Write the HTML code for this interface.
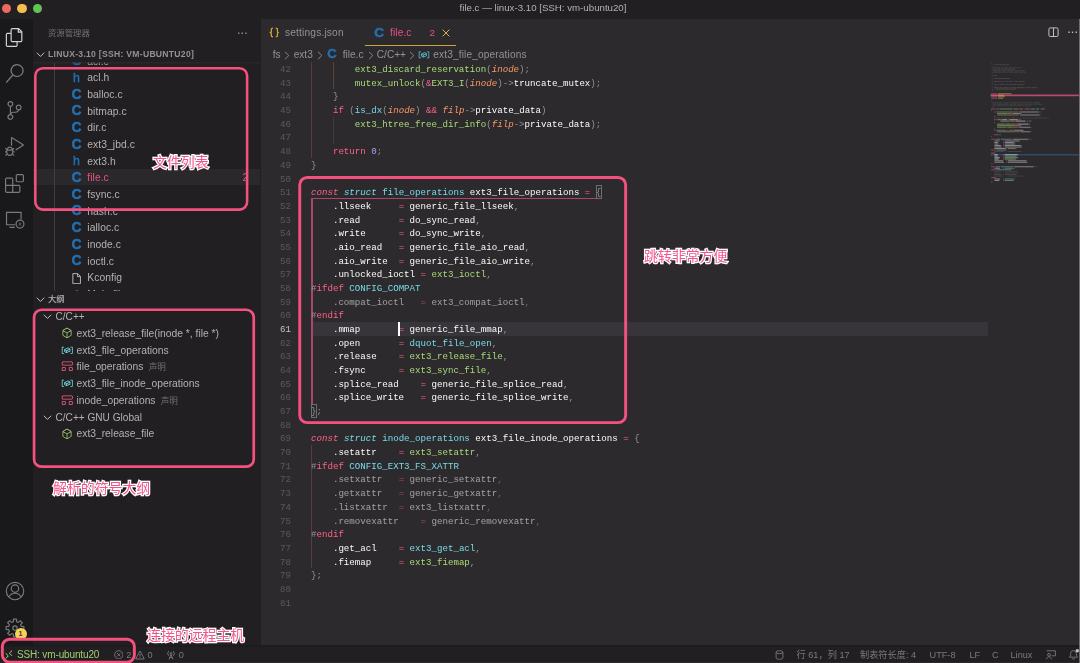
<!DOCTYPE html>
<html lang="zh">
<head>
<meta charset="utf-8">
<title>file.c — linux-3.10 [SSH: vm-ubuntu20]</title>
<style>
*{box-sizing:border-box;margin:0;padding:0}
html,body{width:1080px;height:663px;overflow:hidden;background:#2d2a2e}
body{position:relative;font-family:"Liberation Sans","Noto Sans CJK SC",sans-serif;font-size:9.9px;color:#c1c0c0}
.abs{position:absolute}
#titlebar,#activity,#sidebar,#editor,#status,.anno{will-change:transform}
#titlebar{left:0;top:0;width:1080px;height:18.5px;background:#221f22;z-index:5}
#titlebar .t{position:absolute;left:0;width:1086px;top:0;height:18px;line-height:16.4px;text-align:center;font-size:9.7px;color:#b3b1b2}
.tl{position:absolute;top:3.7px;width:9.4px;height:9.4px;border-radius:50%}
#activity{left:0;top:18px;width:33px;height:627.6px;background:#19181a}
#sidebar{left:33px;top:18px;width:228px;height:627.6px;background:#221f22}
#editor{left:261px;top:18px;width:818px;height:627.6px;background:#2d2a2e}
#rightedge{left:1078.8px;top:0;width:1.2px;height:663px;background:#6f6d70}
#status{left:0;top:645px;width:1079px;height:18px;background:#221f22;border-top:2px solid #1d1b1e;border-bottom:1.1px solid #2c292d;color:#7b797c;font-size:9.2px}
#status span{position:absolute;top:-0.8px;line-height:18px;white-space:nowrap}
.box{position:absolute;border:2.5px solid #f4517f;border-radius:9px}
.anno{position:absolute;font-family:"Liberation Sans","Noto Sans CJK SC",sans-serif;font-weight:400;font-size:13.9px;line-height:16px;color:#f2558a;white-space:nowrap;-webkit-text-stroke:2.5px #fff;paint-order:stroke fill}
/* sidebar */
.row{position:absolute;left:0;width:227px;height:16.67px;line-height:16.67px;white-space:nowrap;color:#b3b1b3;font-size:10.3px}
.row .lbl{position:absolute;left:54.3px;top:0;letter-spacing:.06px}
.row .ic{position:absolute;left:38px;top:0;width:12px;text-align:center;font-weight:700;color:#2270b2;-webkit-text-stroke:0.45px #2270b2;font-size:13.9px;margin-top:-1.5px;margin-left:-0.5px}
.orow{position:absolute;left:0;width:227px;height:16.67px;line-height:16.67px;white-space:nowrap;color:#b3b1b3;font-size:10.3px}
.orow .lbl{position:absolute;left:43.5px;top:0}
.orow svg{position:absolute;left:28.7px;top:1.8px}
.dim{color:#727072;font-size:8.6px}
/* code */
#code{position:absolute;left:0;top:44.2px;width:818px;font-family:"Liberation Mono","DejaVu Sans Mono",monospace;font-size:9.14px;line-height:13.68px;color:#fcfcfa}
.ln{position:absolute;left:0;width:818px;height:13.68px;white-space:pre}
.ln .n{position:absolute;left:0;width:30px;text-align:right;color:#5b595c}
.ln .c{position:absolute;left:50px;top:0}
.k{color:#ff6188}.ki{color:#ff6188;font-style:italic}.bi{color:#78dce8;font-style:italic}.b{color:#78dce8}
.g{color:#a9dc76}.o{color:#fc9867;font-style:italic}.p{color:#ab9df2}.y{color:#939293}.w{color:#fcfcfa}
.f{opacity:.55}
.guide{position:absolute;width:1px;background:#403e41}
</style>
</head>
<body>
<svg width="0" height="0" style="position:absolute">
<defs>
<symbol id="i-var" viewBox="0 0 16 13"><path fill="currentColor" transform="translate(0,-2)" d="M2 5h2V4H1.500l-.5.5v8l.5.5H4v-1H2V5zm12.500-1H12v1h2v7h-2v1h2.500l.5-.5v-8l-.5-.5zm-2.740 2.570L12 7v2.510l-.3.450-4.500 2h-.460l-2.500-1.500-.240-.430v-2.500l.3-.460 4.500-2h.460l2.500 1.500zM5 9.710l1.500.9V9.280L5 8.380v1.330zm.580-2.150l1.450.870 3.390-1.500-1.450-.870-3.390 1.500zm1.950 3.170l3.500-1.560v-1.400l-3.500 1.550v1.410z"/></symbol>
<symbol id="i-method" viewBox="0 0 16 16"><path fill="currentColor" d="M13.510 4l-5-3h-1l-5 3-.490.860v6l.490.850 5 3h1l5-3 .490-.850v-6L13.510 4zm-6 9.560l-4.500-2.700V5.700l4.500 2.450v5.410zM3.270 4.700l4.740-2.840 4.740 2.840-4.740 2.590L3.270 4.700zm9.740 6.160l-4.500 2.700V8.150l4.500-2.450v5.160z"/></symbol>
<symbol id="i-struct" viewBox="0 0 16 16"><path fill="currentColor" d="M2 2L1 3v3l1 1h12l1-1V3l-1-1H2zm0 1h12v3H2V3zm-1 7l1-1h3l1 1v3l-1 1H2l-1-1v-3zm2 0H2v3h3v-3H3zm7 0l1-1h3l1 1v3l-1 1h-3l-1-1v-3zm2 0h-1v3h3v-3h-2z"/></symbol>
<symbol id="i-chev" viewBox="0 0 16 16"><path fill="none" stroke="currentColor" stroke-width="1.45" d="M2.600 5.400L8 10.800 13.400 5.400"/></symbol>
</defs>
</svg>

<div id="titlebar" class="abs">
  <div class="tl" style="left:2px;background:#ec6a5e"></div>
  <div class="tl" style="left:17.3px;background:#f4bf4f"></div>
  <div class="tl" style="left:32.6px;background:#61c554"></div>
  <div class="t">file.c — linux-3.10 [SSH: vm-ubuntu20]</div>
</div>
<div id="activity" class="abs"><!-- coords relative to #activity (top 18) -->
<svg class="abs" style="left:4.5px;top:9.5px" width="19" height="19" viewBox="0 0 24 24"><path fill="#d2d0d1" d="M17.500 0h-9L7 1.500V6H2.500L1 7.500v15.070L2.500 24h12.070L16 22.570V18h4.700l1.300-1.430V4.500L17.500 0zm0 2.120l2.380 2.380H17.500V2.120zm-3 20.380h-12v-15H7v9.070L8.500 18h6v4.500zm6-6h-12v-15H16V6h4.500v10.500z"/></svg>
<svg class="abs" style="left:4.5px;top:46px" width="19" height="19" viewBox="0 0 24 24"><path fill="#7b797c" d="M15.250 0a8.250 8.250 0 0 0-6.180 13.720L1 22.880l1.120 1 8.050-9.120A8.251 8.251 0 1 0 15.250.010V0zm0 15a6.750 6.750 0 1 1 0-13.500 6.750 6.750 0 0 1 0 13.500z"/></svg>
<svg class="abs" style="left:4.8px;top:82.5px" width="19" height="19" viewBox="0 0 24 24"><path fill="#7b797c" d="M21.007 8.222A3.738 3.738 0 0 0 15.045 5.200a3.737 3.737 0 0 0 1.156 6.583 2.988 2.988 0 0 1-2.668 1.670h-2.990a4.456 4.456 0 0 0-2.989 1.165V7.400a3.737 3.737 0 1 0-1.494 0v9.117a3.776 3.776 0 1 0 1.816.099 2.990 2.990 0 0 1 2.668-1.667h2.990a4.484 4.484 0 0 0 4.223-3.039 3.736 3.736 0 0 0 3.250-3.687zM4.565 3.738a2.242 2.242 0 1 1 4.484 0 2.242 2.242 0 0 1-4.484 0zm4.484 16.441a2.242 2.242 0 1 1-4.484 0 2.242 2.242 0 0 1 4.484 0zm8.221-9.715a2.242 2.242 0 1 1 0-4.485 2.242 2.242 0 0 1 0 4.485z"/></svg>
<svg class="abs" style="left:4.5px;top:119px" width="19" height="19" viewBox="0 0 24 24"><path fill="#7b797c" d="M10.940 13.500l-1.320 1.320a3.730 3.730 0 0 0-7.240 0L1.060 13.500 0 14.560l1.720 1.720-.22.220V18H0v1.500h1.500v.080c.077.489.214.966.410 1.420L0 22.940 1.060 24l1.650-1.650A4.308 4.308 0 0 0 6 24a4.310 4.310 0 0 0 3.290-1.650L10.940 24 12 22.940 10.090 21c.198-.464.336-.951.410-1.450v-.1H12V18h-1.500v-1.500l-.22-.22L12 14.560l-1.060-1.060zM6 13.500a2.250 2.250 0 0 1 2.250 2.250h-4.500A2.250 2.250 0 0 1 6 13.500zm3 6a3.330 3.330 0 0 1-3 3 3.330 3.330 0 0 1-3-3v-2.250h6v2.250zm14.760-9.900v1.260L13.500 17.370V15.600l8.500-5.370L9 2v9.460a5.070 5.070 0 0 0-1.500-.72V.630L8.640 0l15.120 9.600z"/></svg>
<svg class="abs" style="left:4.5px;top:155.500px" width="19" height="19" viewBox="0 0 24 24"><path fill="#7b797c" d="M13.500 1.500L15 0h7.500L24 1.500V9l-1.500 1.500H15L13.500 9V1.500zm1.500 0V9h7.500V1.500H15zM0 15V6l1.500-1.500H9L10.500 6v7.500H18l1.500 1.500v7.500L18 24H1.500L0 22.500V15zm9-1.500V6H1.500v7.500H9zM9 15H1.500v7.500H9V15zm1.500 7.500H18V15h-7.500v7.500z"/></svg>
<svg class="abs" style="left:5.0px;top:192px" width="20" height="19" viewBox="0 0 25 24"><g fill="none" stroke="#7b797c" stroke-width="1.5"><path d="M12.500 18.600H1.800V3h18.400v8.600M5.500 22h6.700"/><circle cx="18.800" cy="17.800" r="5"/><path d="M17.300 15.700l1.700 1.600-1.700 1.600M20.300 16.700l-1.600 1.600 1.600 1.600" stroke-width="1.100"/></g></svg>
<!-- account -->
<svg class="abs" style="left:4.5px;top:563.3px" width="20" height="20" viewBox="0 0 20 20"><g fill="none" stroke="#7b797c" stroke-width="1.15"><circle cx="10" cy="10" r="8.7"/><circle cx="10" cy="7.6" r="3.7"/><path d="M3.800 16.100c1.300-2.700 3.600-3.900 6.200-3.900s4.900 1.200 6.200 3.900"/></g></svg>
<!-- gear -->
<svg class="abs" style="left:4.8px;top:599.8px" width="20" height="20" viewBox="0 0 20 20"><g fill="none" stroke="#7b797c" stroke-width="1.15" stroke-linejoin="round"><path d="M8.43 3.69L8.51 1.12L11.49 1.12L11.57 3.69L13.35 4.43L15.23 2.67L17.33 4.77L15.57 6.65L16.31 8.43L18.88 8.51L18.88 11.49L16.31 11.57L15.57 13.35L17.33 15.23L15.23 17.33L13.35 15.57L11.57 16.31L11.49 18.88L8.51 18.88L8.43 16.31L6.65 15.57L4.77 17.33L2.67 15.23L4.43 13.35L3.69 11.57L1.12 11.49L1.12 8.51L3.69 8.43L4.43 6.65L2.67 4.77L4.77 2.67L6.65 4.43z"/><circle cx="10" cy="10" r="2.2"/></g></svg>
<div class="abs" style="left:14.6px;top:609.8px;width:12px;height:12px;border-radius:50%;background:#f6d356;color:#3b3a3c;font-size:7.5px;font-weight:700;line-height:12px;text-align:center">1</div>
</div>
<div id="sidebar" class="abs"><div class="abs" style="left:15px;top:7.6px;font-size:8.4px;line-height:15px;color:#727072;white-space:nowrap">资源管理器</div>
<div class="abs" style="left:204.5px;top:6.1px;font-size:9px;line-height:15px;color:#939293;letter-spacing:1.1px;font-weight:700">...</div>
<svg class="abs" style="left:2.3px;top:30.8px;color:#c1c0c0" width="11" height="11"><use href="#i-chev"/></svg>
<div class="abs" style="left:15px;top:28.5px;font-size:8.6px;line-height:15px;font-weight:700;color:#939293;white-space:nowrap;letter-spacing:0.28px">LINUX-3.10 [SSH: VM-UBUNTU20]</div>
<div class="abs" style="left:0;top:44px;width:227px;height:229.2px;overflow:hidden">
<div class="row" style="top:-8.27px;"><span class="ic">C</span><span class="lbl">acl.c</span></div>
<div class="row" style="top:8.40px;"><span class="ic" style="font-weight:400;font-size:12.4px;color:#2270b2;-webkit-text-stroke:0.4px #2270b2;margin-top:-0.3px">h</span><span class="lbl">acl.h</span></div>
<div class="row" style="top:25.07px;"><span class="ic">C</span><span class="lbl">balloc.c</span></div>
<div class="row" style="top:41.74px;"><span class="ic">C</span><span class="lbl">bitmap.c</span></div>
<div class="row" style="top:58.41px;"><span class="ic">C</span><span class="lbl">dir.c</span></div>
<div class="row" style="top:75.08px;"><span class="ic">C</span><span class="lbl">ext3_jbd.c</span></div>
<div class="row" style="top:91.75px;"><span class="ic" style="font-weight:400;font-size:12.4px;color:#2270b2;-webkit-text-stroke:0.4px #2270b2;margin-top:-0.3px">h</span><span class="lbl">ext3.h</span></div>
<div class="abs" style="left:0;top:106.6px;width:227.6px;height:16.9px;background:#2b282c"></div>
<div class="row" style="top:108.42px;"><span class="ic">C</span><span class="lbl" style="color:#e5537f">file.c</span><span class="abs" style="left:209.5px;top:0;color:#e5537f">2</span></div>
<div class="row" style="top:125.09px;"><span class="ic">C</span><span class="lbl">fsync.c</span></div>
<div class="row" style="top:141.76px;"><span class="ic">C</span><span class="lbl">hash.c</span></div>
<div class="row" style="top:158.43px;"><span class="ic">C</span><span class="lbl">ialloc.c</span></div>
<div class="row" style="top:175.10px;"><span class="ic">C</span><span class="lbl">inode.c</span></div>
<div class="row" style="top:191.77px;"><span class="ic">C</span><span class="lbl">ioctl.c</span></div>
<div class="row" style="top:208.44px;"><svg class="abs" style="left:38.6px;top:2.4px" width="9.3" height="11.3" viewBox="0 0 9 11"><path d="M0.800 0.600h4.700l2.700 2.700v7.100h-7.400zM5.300 0.800v2.700h2.700" fill="none" stroke="#c1c0c0" stroke-width="0.9"/></svg><span class="lbl">Kconfig</span></div>
<div class="row" style="top:225.11px;"><span class="ic" style="font-weight:400;font-size:9px;color:#c1c0c0">⚙</span><span class="lbl">Makefile</span></div>
<div class="abs" style="left:21px;top:0;width:1px;height:231px;background:#403e41"></div>
<div class="abs" style="left:0;top:0;width:227px;height:3px;background:linear-gradient(rgba(45,42,46,.8),rgba(45,42,46,0))"></div>
</div>
<svg class="abs" style="left:2.3px;top:276.2px;color:#c1c0c0" width="11" height="11"><use href="#i-chev"/></svg>
<div class="abs" style="left:15px;top:274.1px;font-size:8.4px;line-height:15px;font-weight:500;color:#b5b3b4;white-space:nowrap">大纲</div>
<div class="orow" style="top:291.27px"><svg class="abs" style="left:8.7px;top:2.2px;color:#c1c0c0" width="11" height="11"><use href="#i-chev"/></svg><span class="lbl" style="left:22.5px;font-size:10.1px">C/C++</span></div>
<div class="orow" style="top:308.07px"><svg style="color:#a9dc76;margin-left:-0.5px;margin-top:-0.5px" width="12" height="12"><use href="#i-method"/></svg><span class="lbl">ext3_release_file(inode *, file *)</span></div>
<div class="orow" style="top:324.77px"><svg style="color:#78dce8;margin-left:-0.8px;margin-top:-0.8px" width="12.5" height="12.5"><use href="#i-var"/></svg><span class="lbl">ext3_file_operations</span></div>
<div class="orow" style="top:341.47px"><svg style="color:#ff6188;margin-left:-0.8px;margin-top:-0.8px" width="12.5" height="12.5"><use href="#i-struct"/></svg><span class="lbl">file_operations <span class="dim">&nbsp;声明</span></span></div>
<div class="orow" style="top:358.17px"><svg style="color:#78dce8;margin-left:-0.8px;margin-top:-0.8px" width="12.5" height="12.5"><use href="#i-var"/></svg><span class="lbl">ext3_file_inode_operations</span></div>
<div class="orow" style="top:374.87px"><svg style="color:#ff6188;margin-left:-0.8px;margin-top:-0.8px" width="12.5" height="12.5"><use href="#i-struct"/></svg><span class="lbl">inode_operations <span class="dim">&nbsp;声明</span></span></div>
<div class="orow" style="top:391.57px"><svg class="abs" style="left:8.7px;top:2.2px;color:#c1c0c0" width="11" height="11"><use href="#i-chev"/></svg><span class="lbl" style="left:22.5px;font-size:10.1px">C/C++ GNU Global</span></div>
<div class="orow" style="top:408.27px"><svg style="color:#a9dc76;margin-left:-0.5px;margin-top:-0.5px" width="12" height="12"><use href="#i-method"/></svg><span class="lbl">ext3_release_file</span></div></div>
<div id="editor" class="abs"><!-- tabs -->
<div class="abs" style="left:0;top:0;width:818px;height:28px;font-size:10.2px;line-height:28px;white-space:nowrap">
  <span class="abs" style="left:8.8px;top:0.3px;color:#d9b93a;font-weight:400;font-size:9.8px;letter-spacing:2.6px;-webkit-text-stroke:0.3px #d9b93a">{}</span>
  <span class="abs" style="left:24px;top:0.7px;color:#939293;letter-spacing:.16px">settings.json</span>
  <span class="abs" style="left:113.2px;top:0.6px;color:#2270b2;-webkit-text-stroke:0.45px #2270b2;font-weight:700;font-size:13.6px">C</span>
  <span class="abs" style="left:129px;top:0.7px;color:#e5537f;letter-spacing:.1px">file.c</span>
  <span class="abs" style="left:168.6px;top:0.7px;color:#e5537f;font-size:9.9px">2</span>
  <svg class="abs" style="left:180.5px;top:10.8px" width="8" height="8" viewBox="0 0 8 8"><path d="M0.600 0.600L7.400 7.400M7.400 0.600L0.600 7.400" stroke="#d9b544" stroke-width="1" fill="none"/></svg>
  <div class="abs" style="left:104px;top:26.6px;width:91px;height:1.2px;background:#c9a540"></div>
  <!-- editor actions -->
  <svg class="abs" style="left:786.5px;top:9px" width="11" height="11" viewBox="0 0 11 11"><rect x="0.900" y="0.900" width="9.200" height="8.600" rx="1.300" fill="none" stroke="#c1c0c0" stroke-width="1"/><path d="M5.500 1v8.400" stroke="#c1c0c0" stroke-width="1"/></svg>
  <span class="abs" style="left:806.7px;top:-1.800px;color:#c1c0c0;font-size:9px;letter-spacing:1.1px;font-weight:700">...</span>
</div>
<!-- breadcrumbs -->
<div class="abs" style="left:0;top:28px;width:818px;height:16px;font-size:10.1px;line-height:16.600px;white-space:nowrap;color:#939293">
  <span class="abs" style="left:11.8px;top:0.6px">fs</span>
  <svg class="abs bcs" style="left:22.9px;top:4.6px" width="6" height="9" viewBox="0 0 6 9"><path d="M1 0.800L4.800 4.500 1 8.200" fill="none" stroke="#8a888a" stroke-width="0.950"/></svg>
  <span class="abs" style="left:32.7px;top:0.6px">ext3</span>
  <svg class="abs bcs" style="left:55.6px;top:4.6px" width="6" height="9" viewBox="0 0 6 9"><path d="M1 0.800L4.800 4.500 1 8.200" fill="none" stroke="#8a888a" stroke-width="0.950"/></svg>
  <span class="abs" style="left:66.3px;top:0.3px;color:#2270b2;-webkit-text-stroke:0.4px #2270b2;font-weight:700;font-size:13px">C</span>
  <span class="abs" style="left:81.7px;top:0.6px">file.c</span>
  <svg class="abs bcs" style="left:106.6px;top:4.6px" width="6" height="9" viewBox="0 0 6 9"><path d="M1 0.800L4.800 4.500 1 8.200" fill="none" stroke="#8a888a" stroke-width="0.950"/></svg>
  <span class="abs" style="left:115.8px;top:0.6px">C/C++</span>
  <svg class="abs bcs" style="left:148.2px;top:4.6px" width="6" height="9" viewBox="0 0 6 9"><path d="M1 0.800L4.800 4.500 1 8.200" fill="none" stroke="#8a888a" stroke-width="0.950"/></svg>
  <svg class="abs" style="left:157px;top:4.2px;color:#5fbfd0" width="12" height="9.75" viewBox="0 0 16 13"><use href="#i-var"/></svg>
  <span class="abs" style="left:172.2px;top:0.6px;letter-spacing:.16px">ext3_file_operations</span>
</div>
<div class="abs" style="left:50px;top:304.02px;width:677px;height:13.68px;background:#38353a"></div>
<div class="guide" style="left:50.30px;top:44.10px;height:95.76px;background:#5a3a44;width:1px"></div>
<div class="guide" style="left:72.24px;top:44.10px;height:27.36px;background:#5c4438;width:1px"></div>
<div class="guide" style="left:72.24px;top:98.82px;height:27.36px;background:#403e41;width:1px"></div>
<div class="guide" style="left:50.30px;top:180.90px;height:205.20px;background:#a8476b;width:1.5px"></div>
<div class="guide" style="left:50.30px;top:427.14px;height:123.12px;background:#5a3a44;width:1px"></div>
<div class="abs" style="left:50.30px;top:179.60px;width:285.17px;height:1.6px;background:#a8476b"></div>
<div class="abs" style="left:335.17px;top:167.22px;width:5.78px;height:13.88px;border:1px solid #6e6c6f"></div>
<div class="abs" style="left:49.80px;top:386.10px;width:5.78px;height:13.88px;border:1px solid #6e6c6f"></div>
<div id="code" style="top:45.10px">
<div class="ln" style="top:0.00px"><span class="n">42</span><span class="c">        <span class="g">ext3_discard_reservation</span><span class="y">(</span><span class="o">inode</span><span class="y">);</span></span></div>
<div class="ln" style="top:13.68px"><span class="n">43</span><span class="c">        <span class="g">mutex_unlock</span><span class="y">(</span><span class="k">&amp;</span><span class="g">EXT3_I</span><span class="y">(</span><span class="o">inode</span><span class="y">)-&gt;</span>truncate_mutex<span class="y">);</span></span></div>
<div class="ln" style="top:27.36px"><span class="n">44</span><span class="c">    <span class="y">}</span></span></div>
<div class="ln" style="top:41.04px"><span class="n">45</span><span class="c">    <span class="k">if</span> <span class="y">(</span><span class="b">is_dx</span><span class="y">(</span><span class="o">inode</span><span class="y">)</span> <span class="k">&amp;&amp;</span> <span class="o">filp</span><span class="y">-&gt;</span>private_data<span class="y">)</span></span></div>
<div class="ln" style="top:54.72px"><span class="n">46</span><span class="c">        <span class="g">ext3_htree_free_dir_info</span><span class="y">(</span><span class="o">filp</span><span class="y">-&gt;</span>private_data<span class="y">);</span></span></div>
<div class="ln" style="top:68.40px"><span class="n">47</span><span class="c"></span></div>
<div class="ln" style="top:82.08px"><span class="n">48</span><span class="c">    <span class="k">return</span> <span class="p">0</span><span class="y">;</span></span></div>
<div class="ln" style="top:95.76px"><span class="n">49</span><span class="c"><span class="y">}</span></span></div>
<div class="ln" style="top:109.44px"><span class="n">50</span><span class="c"></span></div>
<div class="ln" style="top:123.12px"><span class="n">51</span><span class="c"><span class="ki">const</span> <span class="bi">struct</span> <span class="b">file_operations</span> ext3_file_operations <span class="k">=</span> <span class="y">{</span></span></div>
<div class="ln" style="top:136.80px"><span class="n">52</span><span class="c">    .llseek     <span class="k">=</span> <span class="w">generic_file_llseek</span><span class="y">,</span></span></div>
<div class="ln" style="top:150.48px"><span class="n">53</span><span class="c">    .read       <span class="k">=</span> <span class="w">do_sync_read</span><span class="y">,</span></span></div>
<div class="ln" style="top:164.16px"><span class="n">54</span><span class="c">    .write      <span class="k">=</span> <span class="w">do_sync_write</span><span class="y">,</span></span></div>
<div class="ln" style="top:177.84px"><span class="n">55</span><span class="c">    .aio_read   <span class="k">=</span> <span class="w">generic_file_aio_read</span><span class="y">,</span></span></div>
<div class="ln" style="top:191.52px"><span class="n">56</span><span class="c">    .aio_write  <span class="k">=</span> <span class="w">generic_file_aio_write</span><span class="y">,</span></span></div>
<div class="ln" style="top:205.20px"><span class="n">57</span><span class="c">    .unlocked_ioctl <span class="k">=</span> <span class="g">ext3_ioctl</span><span class="y">,</span></span></div>
<div class="ln" style="top:218.88px"><span class="n">58</span><span class="c"><span class="y">#</span><span class="k">ifdef</span> <span class="b">CONFIG_COMPAT</span></span></div>
<div class="ln" style="top:232.56px"><span class="n">59</span><span class="c"><span class="f">    .compat_ioctl   <span class="k">=</span> ext3_compat_ioctl<span class="y">,</span></span></span></div>
<div class="ln" style="top:246.24px"><span class="n">60</span><span class="c"><span class="y">#</span><span class="k">endif</span></span></div>
<div class="ln" style="top:259.92px"><span class="n" style="color:#c1c0c0">61</span><span class="c">    .mmap       <span class="k">=</span> <span class="w">generic_file_mmap</span><span class="y">,</span></span></div>
<div class="ln" style="top:273.60px"><span class="n">62</span><span class="c">    .open       <span class="k">=</span> <span class="b">dquot_file_open</span><span class="y">,</span></span></div>
<div class="ln" style="top:287.28px"><span class="n">63</span><span class="c">    .release    <span class="k">=</span> <span class="g">ext3_release_file</span><span class="y">,</span></span></div>
<div class="ln" style="top:300.96px"><span class="n">64</span><span class="c">    .fsync      <span class="k">=</span> <span class="g">ext3_sync_file</span><span class="y">,</span></span></div>
<div class="ln" style="top:314.64px"><span class="n">65</span><span class="c">    .splice_read    <span class="k">=</span> <span class="w">generic_file_splice_read</span><span class="y">,</span></span></div>
<div class="ln" style="top:328.32px"><span class="n">66</span><span class="c">    .splice_write   <span class="k">=</span> <span class="w">generic_file_splice_write</span><span class="y">,</span></span></div>
<div class="ln" style="top:342.00px"><span class="n">67</span><span class="c"><span class="y">};</span></span></div>
<div class="ln" style="top:355.68px"><span class="n">68</span><span class="c"></span></div>
<div class="ln" style="top:369.36px"><span class="n">69</span><span class="c"><span class="ki">const</span> <span class="bi">struct</span> <span class="b">inode_operations</span> ext3_file_inode_operations <span class="k">=</span> <span class="y">{</span></span></div>
<div class="ln" style="top:383.04px"><span class="n">70</span><span class="c">    .setattr    <span class="k">=</span> <span class="g">ext3_setattr</span><span class="y">,</span></span></div>
<div class="ln" style="top:396.72px"><span class="n">71</span><span class="c"><span class="y">#</span><span class="k">ifdef</span> <span class="b">CONFIG_EXT3_FS_XATTR</span></span></div>
<div class="ln" style="top:410.40px"><span class="n">72</span><span class="c"><span class="f">    .setxattr   <span class="k">=</span> generic_setxattr<span class="y">,</span></span></span></div>
<div class="ln" style="top:424.08px"><span class="n">73</span><span class="c"><span class="f">    .getxattr   <span class="k">=</span> generic_getxattr<span class="y">,</span></span></span></div>
<div class="ln" style="top:437.76px"><span class="n">74</span><span class="c"><span class="f">    .listxattr  <span class="k">=</span> ext3_listxattr<span class="y">,</span></span></span></div>
<div class="ln" style="top:451.44px"><span class="n">75</span><span class="c"><span class="f">    .removexattr    <span class="k">=</span> generic_removexattr<span class="y">,</span></span></span></div>
<div class="ln" style="top:465.12px"><span class="n">76</span><span class="c"><span class="y">#</span><span class="k">endif</span></span></div>
<div class="ln" style="top:478.80px"><span class="n">77</span><span class="c">    .get_acl    <span class="k">=</span> <span class="b">ext3_get_acl</span><span class="y">,</span></span></div>
<div class="ln" style="top:492.48px"><span class="n">78</span><span class="c">    .fiemap     <span class="k">=</span> <span class="g">ext3_fiemap</span><span class="y">,</span></span></div>
<div class="ln" style="top:506.16px"><span class="n">79</span><span class="c"><span class="y">};</span></span></div>
<div class="ln" style="top:519.84px"><span class="n">80</span><span class="c"></span></div>
<div class="ln" style="top:533.52px"><span class="n">81</span><span class="c"></span></div>
</div>
<div class="abs" style="left:137.44px;top:304.02px;width:1.3px;height:13.68px;background:#fcfcfa"></div>
<svg class="abs" style="left:0;top:0" width="818" height="200" viewBox="0 0 818 200" shape-rendering="geometricPrecision">
<rect x="729.5" y="76.53" width="88.5" height="1.7" fill="#b64b6c"/>
<rect x="729.5" y="136.38" width="88.5" height="0.9" fill="#2f5f8c"/>
<path fill="#727072" opacity="0.33" d="M730.0 44.7h1.5v1.05h-1.5zM730.8 46.2h0.8v1.05h-0.8zM733.0 46.2h15.2v1.05h-15.2zM730.8 47.7h0.8v1.05h-0.8zM730.8 49.3h0.8v1.05h-0.8zM732.3 49.3h6.9v1.05h-6.9zM739.9 49.3h2.3v1.05h-2.3zM743.0 49.3h3.8v1.05h-3.8zM747.5 49.3h3.8v1.05h-3.8zM752.1 49.3h3.8v1.05h-3.8zM756.7 49.3h3.0v1.05h-3.0zM730.8 50.8h0.8v1.05h-0.8zM732.3 50.8h3.0v1.05h-3.0zM736.1 50.8h3.0v1.05h-3.0zM739.9 50.8h13.7v1.05h-13.7zM730.8 52.3h0.8v1.05h-0.8zM732.3 52.3h8.4v1.05h-8.4zM741.4 52.3h3.0v1.05h-3.0zM745.2 52.3h0.8v1.05h-0.8zM746.8 52.3h6.1v1.05h-6.1zM753.6 52.3h4.6v1.05h-4.6zM759.0 52.3h4.6v1.05h-4.6zM730.8 53.8h0.8v1.05h-0.8zM732.3 53.8h7.6v1.05h-7.6zM740.7 53.8h4.6v1.05h-4.6zM746.0 53.8h1.5v1.05h-1.5zM748.3 53.8h3.8v1.05h-3.8zM752.9 53.8h3.8v1.05h-3.8zM757.4 53.8h4.6v1.05h-4.6zM762.8 53.8h2.3v1.05h-2.3zM730.8 55.4h0.8v1.05h-0.8zM730.8 56.9h0.8v1.05h-0.8zM733.0 56.9h3.0v1.05h-3.0zM730.8 58.4h0.8v1.05h-0.8zM730.8 59.9h0.8v1.05h-0.8zM733.0 59.9h16.0v1.05h-16.0zM730.8 61.5h0.8v1.05h-0.8zM730.8 63.0h0.8v1.05h-0.8zM733.0 63.0h6.9v1.05h-6.9zM740.7 63.0h2.3v1.05h-2.3zM743.7 63.0h3.8v1.05h-3.8zM748.3 63.0h3.0v1.05h-3.0zM752.9 63.0h3.8v1.05h-3.8zM757.4 63.0h6.1v1.05h-6.1zM730.8 64.5h0.8v1.05h-0.8zM730.8 66.0h0.8v1.05h-0.8zM733.0 66.0h3.0v1.05h-3.0zM736.9 66.0h1.5v1.05h-1.5zM739.1 66.0h5.3v1.05h-5.3zM745.2 66.0h3.0v1.05h-3.0zM749.0 66.0h6.1v1.05h-6.1zM755.9 66.0h7.6v1.05h-7.6zM730.8 67.5h0.8v1.05h-0.8zM730.8 69.1h0.8v1.05h-0.8zM733.0 69.1h4.6v1.05h-4.6zM738.4 69.1h3.0v1.05h-3.0zM742.2 69.1h5.3v1.05h-5.3zM748.3 69.1h1.5v1.05h-1.5zM750.6 69.1h4.6v1.05h-4.6zM755.9 69.1h6.9v1.05h-6.9zM763.5 69.1h1.5v1.05h-1.5zM765.8 69.1h3.8v1.05h-3.8zM770.4 69.1h5.3v1.05h-5.3zM730.8 70.6h0.8v1.05h-0.8zM734.6 70.6h20.6v1.05h-20.6zM730.8 72.1h1.5v1.05h-1.5zM730.0 82.8h1.5v1.05h-1.5zM730.8 84.3h0.8v1.05h-0.8zM732.3 84.3h4.6v1.05h-4.6zM737.6 84.3h3.0v1.05h-3.0zM741.4 84.3h1.5v1.05h-1.5zM743.7 84.3h3.8v1.05h-3.8zM748.3 84.3h1.5v1.05h-1.5zM750.6 84.3h6.9v1.05h-6.9zM758.2 84.3h3.0v1.05h-3.0zM762.0 84.3h3.0v1.05h-3.0zM765.8 84.3h3.0v1.05h-3.0zM769.6 84.3h1.5v1.05h-1.5zM771.9 84.3h6.9v1.05h-6.9zM730.8 85.8h0.8v1.05h-0.8zM732.3 85.8h3.0v1.05h-3.0zM736.1 85.8h11.4v1.05h-11.4zM748.3 85.8h3.0v1.05h-3.0zM752.1 85.8h3.0v1.05h-3.0zM755.9 85.8h4.6v1.05h-4.6zM761.2 85.8h1.5v1.05h-1.5zM763.5 85.8h3.8v1.05h-3.8zM768.1 85.8h3.8v1.05h-3.8zM772.7 85.8h2.3v1.05h-2.3zM775.7 85.8h5.3v1.05h-5.3zM730.8 87.3h0.8v1.05h-0.8zM732.3 87.3h3.0v1.05h-3.0zM736.1 87.3h4.6v1.05h-4.6zM741.4 87.3h3.0v1.05h-3.0zM745.2 87.3h3.0v1.05h-3.0zM749.0 87.3h3.8v1.05h-3.8zM753.6 87.3h2.3v1.05h-2.3zM756.7 87.3h3.8v1.05h-3.8zM761.2 87.3h2.3v1.05h-2.3zM764.3 87.3h5.3v1.05h-5.3zM730.8 88.9h1.5v1.05h-1.5zM733.0 99.5h1.5v1.05h-1.5zM735.3 99.5h1.5v1.05h-1.5zM737.6 99.5h1.5v1.05h-1.5zM739.9 99.5h2.3v1.05h-2.3zM743.0 99.5h2.3v1.05h-2.3zM746.0 99.5h3.0v1.05h-3.0zM749.8 99.5h4.6v1.05h-4.6zM755.1 99.5h1.5v1.05h-1.5zM757.4 99.5h2.3v1.05h-2.3zM760.5 99.5h4.6v1.05h-4.6zM765.8 99.5h3.0v1.05h-3.0zM769.6 99.5h2.3v1.05h-2.3zM772.7 99.5h3.8v1.05h-3.8zM777.2 99.5h8.4v1.05h-8.4zM786.4 99.5h1.5v1.05h-1.5zM733.0 133.0h9.9v1.05h-9.9zM745.2 133.0h0.8v1.05h-0.8zM746.8 133.0h13.7v1.05h-13.7zM733.0 152.8h6.9v1.05h-6.9zM742.2 152.8h0.8v1.05h-0.8zM743.7 152.8h13.0v1.05h-13.0zM733.0 154.4h6.9v1.05h-6.9zM742.2 154.4h0.8v1.05h-0.8zM743.7 154.4h13.0v1.05h-13.0zM733.0 155.9h7.6v1.05h-7.6zM742.2 155.9h0.8v1.05h-0.8zM743.7 155.9h11.4v1.05h-11.4zM733.0 157.4h9.1v1.05h-9.1zM745.2 157.4h0.8v1.05h-0.8zM746.8 157.4h15.2v1.05h-15.2z"/>
<path fill="#939293" opacity="0.45" d="M730.0 75.2h0.8v1.05h-0.8zM730.0 76.7h0.8v1.05h-0.8zM730.0 78.2h0.8v1.05h-0.8zM730.0 79.7h0.8v1.05h-0.8zM752.1 90.4h0.8v1.05h-0.8zM762.8 90.4h0.8v1.05h-0.8zM768.1 90.4h0.8v1.05h-0.8zM778.8 90.4h0.8v1.05h-0.8zM783.3 90.4h0.8v1.05h-0.8zM730.0 91.9h0.8v1.05h-0.8zM735.3 93.4h0.8v1.05h-0.8zM752.1 93.4h0.8v1.05h-0.8zM756.7 93.4h0.8v1.05h-0.8zM777.2 93.4h1.5v1.05h-1.5zM779.5 93.4h0.8v1.05h-0.8zM746.0 95.0h0.8v1.05h-0.8zM750.6 95.0h1.5v1.05h-1.5zM759.0 95.0h1.5v1.05h-1.5zM752.9 96.5h0.8v1.05h-0.8zM757.4 96.5h0.8v1.05h-0.8zM778.0 96.5h1.5v1.05h-1.5zM733.0 98.0h0.8v1.05h-0.8zM735.3 101.1h1.5v1.05h-1.5zM739.9 101.1h1.5v1.05h-1.5zM756.7 101.1h0.8v1.05h-0.8zM739.1 102.6h0.8v1.05h-0.8zM748.3 102.6h1.5v1.05h-1.5zM753.6 102.6h1.5v1.05h-1.5zM764.3 102.6h0.8v1.05h-0.8zM768.9 102.6h1.5v1.05h-1.5zM733.0 104.1h0.8v1.05h-0.8zM743.7 105.6h1.5v1.05h-1.5zM749.8 105.6h0.8v1.05h-0.8zM754.4 105.6h2.3v1.05h-2.3zM767.3 105.6h1.5v1.05h-1.5zM754.4 107.1h0.8v1.05h-0.8zM759.0 107.1h1.5v1.05h-1.5zM745.2 108.7h1.5v1.05h-1.5zM751.3 108.7h0.8v1.05h-0.8zM755.9 108.7h2.3v1.05h-2.3zM768.9 108.7h1.5v1.05h-1.5zM733.0 110.2h0.8v1.05h-0.8zM735.3 111.7h0.8v1.05h-0.8zM739.9 111.7h0.8v1.05h-0.8zM744.5 111.7h0.8v1.05h-0.8zM751.3 111.7h1.5v1.05h-1.5zM762.0 111.7h0.8v1.05h-0.8zM754.4 113.2h0.8v1.05h-0.8zM758.2 113.2h1.5v1.05h-1.5zM768.9 113.2h1.5v1.05h-1.5zM739.1 116.3h0.8v1.05h-0.8zM730.0 117.8h0.8v1.05h-0.8zM769.6 120.8h0.8v1.05h-0.8zM733.0 122.4h0.8v1.05h-0.8zM758.2 122.4h0.8v1.05h-0.8zM733.0 123.9h0.8v1.05h-0.8zM752.9 123.9h0.8v1.05h-0.8zM733.0 125.4h0.8v1.05h-0.8zM753.6 125.4h0.8v1.05h-0.8zM733.0 126.9h0.8v1.05h-0.8zM759.7 126.9h0.8v1.05h-0.8zM733.0 128.5h0.8v1.05h-0.8zM760.5 128.5h0.8v1.05h-0.8zM733.0 130.0h0.8v1.05h-0.8zM754.4 130.0h0.8v1.05h-0.8zM730.0 131.5h0.8v1.05h-0.8zM730.0 134.6h0.8v1.05h-0.8zM733.0 136.1h0.8v1.05h-0.8zM756.7 136.1h0.8v1.05h-0.8zM733.0 137.6h0.8v1.05h-0.8zM755.1 137.6h0.8v1.05h-0.8zM733.0 139.1h0.8v1.05h-0.8zM756.7 139.1h0.8v1.05h-0.8zM733.0 140.6h0.8v1.05h-0.8zM754.4 140.6h0.8v1.05h-0.8zM733.0 142.2h0.8v1.05h-0.8zM765.1 142.2h0.8v1.05h-0.8zM733.0 143.7h0.8v1.05h-0.8zM765.8 143.7h0.8v1.05h-0.8zM730.0 145.2h1.5v1.05h-1.5zM775.0 148.3h0.8v1.05h-0.8zM733.0 149.8h0.8v1.05h-0.8zM752.9 149.8h0.8v1.05h-0.8zM730.0 151.3h0.8v1.05h-0.8zM730.0 158.9h0.8v1.05h-0.8zM733.0 160.4h0.8v1.05h-0.8zM752.9 160.4h0.8v1.05h-0.8zM733.0 162.0h0.8v1.05h-0.8zM752.1 162.0h0.8v1.05h-0.8zM730.0 163.5h1.5v1.05h-1.5z"/>
<path fill="#ff6188" opacity="0.45" d="M730.8 75.2h5.3v1.05h-5.3zM730.8 76.7h5.3v1.05h-5.3zM730.8 78.2h5.3v1.05h-5.3zM730.8 79.7h5.3v1.05h-5.3zM730.0 90.4h4.6v1.05h-4.6zM733.0 93.4h1.5v1.05h-1.5zM733.0 101.1h1.5v1.05h-1.5zM746.8 101.1h0.8v1.05h-0.8zM758.2 101.1h1.5v1.05h-1.5zM765.8 102.6h1.5v1.05h-1.5zM733.0 111.7h1.5v1.05h-1.5zM746.0 111.7h1.5v1.05h-1.5zM733.0 116.3h4.6v1.05h-4.6zM730.0 120.8h3.8v1.05h-3.8zM768.1 120.8h0.8v1.05h-0.8zM742.2 122.4h0.8v1.05h-0.8zM742.2 123.9h0.8v1.05h-0.8zM742.2 125.4h0.8v1.05h-0.8zM742.2 126.9h0.8v1.05h-0.8zM742.2 128.5h0.8v1.05h-0.8zM745.2 130.0h0.8v1.05h-0.8zM730.8 131.5h3.8v1.05h-3.8zM730.8 134.6h3.8v1.05h-3.8zM742.2 136.1h0.8v1.05h-0.8zM742.2 137.6h0.8v1.05h-0.8zM742.2 139.1h0.8v1.05h-0.8zM742.2 140.6h0.8v1.05h-0.8zM745.2 142.2h0.8v1.05h-0.8zM745.2 143.7h0.8v1.05h-0.8zM730.0 148.3h3.8v1.05h-3.8zM773.4 148.3h0.8v1.05h-0.8zM742.2 149.8h0.8v1.05h-0.8zM730.8 151.3h3.8v1.05h-3.8zM730.8 158.9h3.8v1.05h-3.8zM742.2 160.4h0.8v1.05h-0.8zM742.2 162.0h0.8v1.05h-0.8z"/>
<path fill="#ffd866" opacity="0.45" d="M736.9 75.2h13.7v1.05h-13.7zM736.9 76.7h6.1v1.05h-6.1zM736.9 78.2h6.9v1.05h-6.9zM736.9 79.7h5.3v1.05h-5.3z"/>
<path fill="#78dce8" opacity="0.45" d="M735.3 90.4h2.3v1.05h-2.3zM752.9 90.4h4.6v1.05h-4.6zM769.6 90.4h4.6v1.05h-4.6zM775.0 90.4h3.0v1.05h-3.0zM736.1 111.7h3.8v1.05h-3.8zM734.6 120.8h4.6v1.05h-4.6zM739.9 120.8h11.4v1.05h-11.4zM735.3 131.5h9.9v1.05h-9.9zM743.7 137.6h11.4v1.05h-11.4zM734.6 148.3h4.6v1.05h-4.6zM739.9 148.3h12.2v1.05h-12.2zM735.3 151.3h15.2v1.05h-15.2zM743.7 160.4h9.1v1.05h-9.1z"/>
<path fill="#a9dc76" opacity="0.45" d="M738.4 90.4h13.0v1.05h-13.0zM736.1 93.4h16.0v1.05h-16.0zM736.1 95.0h9.9v1.05h-9.9zM736.1 96.5h16.8v1.05h-16.8zM739.9 102.6h8.4v1.05h-8.4zM736.1 105.6h7.6v1.05h-7.6zM745.2 105.6h4.6v1.05h-4.6zM736.1 107.1h18.3v1.05h-18.3zM736.1 108.7h9.1v1.05h-9.1zM746.8 108.7h4.6v1.05h-4.6zM736.1 113.2h18.3v1.05h-18.3zM746.8 130.0h7.6v1.05h-7.6zM743.7 139.1h13.0v1.05h-13.0zM743.7 140.6h10.7v1.05h-10.7zM743.7 149.8h9.1v1.05h-9.1zM743.7 162.0h8.4v1.05h-8.4z"/>
<path fill="#fc9867" opacity="0.45" d="M758.2 90.4h3.8v1.05h-3.8zM764.3 90.4h3.8v1.05h-3.8zM780.3 90.4h3.0v1.05h-3.0zM752.9 93.4h3.8v1.05h-3.8zM746.8 95.0h3.8v1.05h-3.8zM753.6 96.5h3.8v1.05h-3.8zM736.9 101.1h3.0v1.05h-3.0zM749.8 102.6h3.8v1.05h-3.8zM750.6 105.6h3.8v1.05h-3.8zM755.1 107.1h3.8v1.05h-3.8zM752.1 108.7h3.8v1.05h-3.8zM740.7 111.7h3.8v1.05h-3.8zM748.3 111.7h3.0v1.05h-3.0zM755.1 113.2h3.0v1.05h-3.0z"/>
<path fill="#fcfcfa" opacity="0.42" d="M758.2 93.4h19.1v1.05h-19.1zM752.1 95.0h6.9v1.05h-6.9zM759.0 96.5h19.1v1.05h-19.1zM741.4 101.1h4.6v1.05h-4.6zM748.3 101.1h8.4v1.05h-8.4zM755.1 102.6h9.1v1.05h-9.1zM756.7 105.6h10.7v1.05h-10.7zM758.2 108.7h10.7v1.05h-10.7zM752.9 111.7h9.1v1.05h-9.1zM759.7 113.2h9.1v1.05h-9.1zM752.1 120.8h15.2v1.05h-15.2zM733.8 122.4h4.6v1.05h-4.6zM743.7 122.4h14.5v1.05h-14.5zM733.8 123.9h3.0v1.05h-3.0zM743.7 123.9h9.1v1.05h-9.1zM733.8 125.4h3.8v1.05h-3.8zM743.7 125.4h9.9v1.05h-9.9zM733.8 126.9h6.1v1.05h-6.1zM743.7 126.9h16.0v1.05h-16.0zM733.8 128.5h6.9v1.05h-6.9zM743.7 128.5h16.8v1.05h-16.8zM733.8 130.0h10.7v1.05h-10.7zM733.8 136.1h3.0v1.05h-3.0zM743.7 136.1h13.0v1.05h-13.0zM733.8 137.6h3.0v1.05h-3.0zM733.8 139.1h5.3v1.05h-5.3zM733.8 140.6h3.8v1.05h-3.8zM733.8 142.2h8.4v1.05h-8.4zM746.8 142.2h18.3v1.05h-18.3zM733.8 143.7h9.1v1.05h-9.1zM746.8 143.7h19.1v1.05h-19.1zM752.9 148.3h19.8v1.05h-19.8zM733.8 149.8h5.3v1.05h-5.3zM733.8 160.4h5.3v1.05h-5.3zM733.8 162.0h4.6v1.05h-4.6z"/>
<path fill="#ab9df2" opacity="0.45" d="M768.1 102.6h0.8v1.05h-0.8zM738.4 116.3h0.8v1.05h-0.8z"/>
</svg></div>
<div id="status" class="abs"><svg class="abs" style="left:5.0px;top:3.0px" width="8" height="9" viewBox="0 0 8 9"><path d="M0.700 3.300l2.600 2.600-2.600 2.600M7 0.600L4.400 3.200 7 5.800" fill="none" stroke="#a9dc76" stroke-width="1"/></svg>
<span style="left:16.900px;color:#9fce6f;font-size:10px;letter-spacing:-0.13px">SSH: vm-ubuntu20</span>
<svg class="abs" style="left:113.500px;top:2.7px" width="9.6" height="9.6" viewBox="0 0 10 10"><g fill="none" stroke="#7b797c" stroke-width="0.950"><circle cx="5" cy="5" r="4.300"/><path d="M3.300 3.300l3.400 3.400M6.700 3.300L3.300 6.700"/></g></svg>
<span style="left:126.300px">2</span>
<svg class="abs" style="left:135px;top:2.7px" width="10" height="10" viewBox="0 0 10 10"><g fill="none" stroke="#7b797c" stroke-width="0.900"><path d="M5 1L9.300 9H0.700z"/><path d="M5 3.800v2.800M5 7.300v.9"/></g></svg>
<span style="left:147.600px">0</span>
<svg class="abs" style="left:166px;top:2.7px" width="10" height="10" viewBox="0 0 10 10"><g fill="none" stroke="#7b797c" stroke-width="0.900"><path d="M5 4.500L3 9.500M5 4.500L7 9.500M3.700 7.500h2.600"/><circle cx="5" cy="3.500" r="0.900"/><path d="M2.700 1.200a3.300 3.300 0 0 0 0 4.600M7.300 1.200a3.300 3.300 0 0 1 0 4.600"/></g></svg>
<span style="left:178.800px">0</span>
<svg class="abs" style="left:774.500px;top:2.9px" width="9" height="10" viewBox="0 0 9 10"><g fill="none" stroke="#7b797c" stroke-width="0.900"><ellipse cx="4.500" cy="2.200" rx="3.400" ry="1.500"/><path d="M1.100 2.200v5.600c0 .8 1.500 1.500 3.400 1.500s3.400-.7 3.400-1.500V2.200"/></g></svg>
<span style="left:796.500px">行 61，列 17</span>
<span style="left:860px">制表符长度: 4</span>
<span style="left:929.500px">UTF-8</span>
<span style="left:969.500px">LF</span>
<span style="left:992px">C</span>
<span style="left:1010.500px">Linux</span>
<svg class="abs" style="left:1046px;top:2.9px" width="10" height="10" viewBox="0 0 10 10"><g fill="none" stroke="#7b797c" stroke-width="0.900"><path d="M0.600 0.800h8.800v5H5.500"/><circle cx="3" cy="4.800" r="1.400"/><path d="M0.600 9.300c.2-1.700 1.100-2.500 2.400-2.500s2.200.8 2.400 2.500"/></g></svg>
<svg class="abs" style="left:1067.500px;top:2.4px" width="11" height="11" viewBox="0 0 11 11"><g fill="none" stroke="#7b797c" stroke-width="0.900"><path d="M1.500 8.200h8l-1.100-1.500V4.500a2.900 2.900 0 0 0-5.800 0v2.200zM4.400 9.300a1.100 1.100 0 0 0 2.200 0"/></g><circle cx="9.300" cy="1.800" r="1.700" fill="#c1c0c0"/></svg>
</div>
<div id="rightedge" class="abs"></div>
<svg class="abs" style="left:0;top:0;pointer-events:none" width="1080" height="663" viewBox="0 0 1080 663"><g fill="none" stroke="#f5517f">
<rect x="35.32" y="68.18" width="211.80" height="141.45" rx="7.53" stroke-width="2.55"/>
<rect x="34.05" y="309.75" width="219.70" height="156.90" rx="7.45" stroke-width="2.7"/>
<rect x="299.75" y="177.45" width="325.90" height="245.20" rx="7.45" stroke-width="2.9"/>
<rect x="2.35" y="639.25" width="132.00" height="22.90" rx="7.20" stroke-width="2.9"/>
</g></svg>
<div class="anno" style="left:153.1px;top:153.5px">文件列表</div>
<div class="anno" style="left:643.5px;top:247.6px">跳转非常方便</div>
<div class="anno" style="left:53.1px;top:480px">解析的符号大纲</div>
<div class="anno" style="left:146.500px;top:626.500px">连接的远程主机</div>

</body>
</html>
